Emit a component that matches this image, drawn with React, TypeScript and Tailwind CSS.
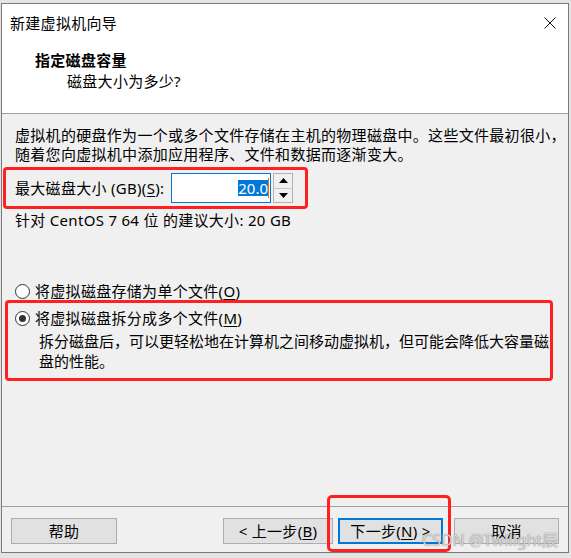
import React from "react";

const F = { fontFamily: '"Noto Sans", "Noto Sans CJK SC", sans-serif' };

function Radio({ checked }: { checked?: boolean }) {
  return (
    <div className="w-[15px] h-[15px] rounded-full border border-[#333333] bg-white flex items-center justify-center shrink-0">
      {checked && <div className="w-[7px] h-[7px] rounded-full bg-[#333333]" />}
    </div>
  );
}

function Btn({ children, w, primary }: { children: React.ReactNode; w: string; primary?: boolean }) {
  return (
    <div
      className={`${w} h-[26px] flex items-center justify-center bg-[#e1e1e1] text-[15px] leading-[20px] text-black ${
        primary ? "border-2 border-[#0078d7]" : "border border-[#adadad]"
      }`}
    >
      {children}
    </div>
  );
}

export default function App() {
  return (
    <div
      className="w-[571px] h-[558px] bg-[#e4e4e4] pt-[3px] pl-[1px] overflow-hidden text-black tracking-[0.3px]"
      style={F}
    >
      <div className="relative w-[568px] h-[550px] border border-[#7a7a7a] bg-[#f0f0f0] flex flex-col overflow-hidden">
        {/* header */}
        <div className="h-[110px] bg-white border-b border-[#a0a0a0] flex flex-col shrink-0">
          <div className="mt-[9px] h-[20px] flex items-center justify-between pl-[8px] pr-[12px]">
            <span className="text-[15px] leading-[20px]">新建虚拟机向导</span>
            <svg width="12" height="12" viewBox="0 0 12 12">
              <path d="M0.5 0.5 L11.5 11.5 M11.5 0.5 L0.5 11.5" stroke="#111" strokeWidth="1" fill="none" />
            </svg>
          </div>
          <div className="mt-[17px] ml-[33px] text-[15px] leading-[20px] font-bold">指定磁盘容量</div>
          <div className="mt-[1px] ml-[65px] text-[15px] leading-[20px]">磁盘大小为多少?</div>
        </div>

        {/* body */}
        <div className="flex-1 flex flex-col">
          <div className="mt-[12px] ml-[13px] text-[15px] leading-[19px] whitespace-nowrap">
            <div>虚拟机的硬盘作为一个或多个文件存储在主机的物理磁盘中。这些文件最初很小，</div>
            <div>随着您向虚拟机中添加应用程序、文件和数据而逐渐变大。</div>
          </div>

          <div className="mt-[3px] ml-[1px] w-[305px] h-[42px] border-[3px] border-[#ff2020] rounded-[4px] flex items-center pl-[9px]">
            <span className="w-[156px] text-[15px] leading-[20px] whitespace-nowrap">
              最大磁盘大小 (GB)(<span className="underline underline-offset-2">S</span>):
            </span>
            <div className="w-[100px] h-[30px] border border-[#0078d7] bg-white flex items-center justify-end pr-[1px]">
              <span className="bg-[#0078d7] text-white text-[15px] leading-[16px] h-[16px] tracking-normal">20.0</span>
              <span className="w-[1px] h-[20px] bg-[#f07020]" />
            </div>
            <div className="ml-[2px] w-[20px] h-[30px] border border-[#b4b4b4] bg-[#f0f0f0] flex flex-col">
              <div className="flex-1 border-b border-[#c8c8c8] flex items-center justify-center">
                <svg width="9" height="5" viewBox="0 0 9 5">
                  <path d="M4.5 0 L9 5 L0 5 Z" fill="#000" />
                </svg>
              </div>
              <div className="flex-1 flex items-center justify-center">
                <svg width="9" height="5" viewBox="0 0 9 5">
                  <path d="M0 0 L9 0 L4.5 5 Z" fill="#000" />
                </svg>
              </div>
            </div>
          </div>

          <div className="mt-[2px] ml-[13px] text-[15px] leading-[18px] whitespace-nowrap">
            针对 CentOS 7 64 位 的建议大小: 20 GB
          </div>

          <div className="mt-[54px] ml-[13px] h-[16px] flex items-center gap-[5px] whitespace-nowrap">
            <Radio />
            <span className="text-[15px] leading-[16px]">
              将虚拟磁盘存储为单个文件(<span className="underline underline-offset-2">O</span>)
            </span>
          </div>

          <div className="mt-[1px] ml-[3px] w-[548px] h-[81px] border-[3px] border-[#ff2020] rounded-[4px] flex flex-col pt-[5px]">
            <div className="ml-[7px] h-[20px] flex items-center gap-[5px] whitespace-nowrap">
              <Radio checked />
              <span className="text-[15px] leading-[20px]">
                将虚拟磁盘拆分成多个文件(<span className="underline underline-offset-2">M</span>)
              </span>
            </div>
            <div className="mt-[3px] ml-[31px] text-[15px] leading-[20px] whitespace-nowrap tracking-normal">
              <div>拆分磁盘后，可以更轻松地在计算机之间移动虚拟机，但可能会降低大容量磁</div>
              <div>盘的性能。</div>
            </div>
          </div>
        </div>

        {/* footer */}
        <div className="h-[46px] border-t border-[#a0a0a0] flex items-start pt-[11px] pl-[9px] pr-[9px] shrink-0">
          <Btn w="w-[106px]">帮助</Btn>
          <div className="ml-auto flex">
            <Btn w="w-[110px]">
              &lt; 上一步(<span className="underline underline-offset-2">B</span>)
            </Btn>
            <div className="ml-[5px]">
              <Btn w="w-[105px]" primary>
                下一步(<span className="underline underline-offset-2">N</span>) &gt;
              </Btn>
            </div>
            <div className="ml-[11px]">
              <Btn w="w-[105px]">取消</Btn>
            </div>
          </div>
        </div>

        {/* annotation overlay */}
        <div className="absolute left-[325px] top-[491px] w-[124px] h-[57px] border-[3px] border-[#ff2020] rounded-[5px] pointer-events-none" />
        <div className="absolute left-[420px] top-[526px] text-[16px] leading-[20px] tracking-normal text-[rgba(255,255,255,0.75)] [text-shadow:0_0_1px_rgba(60,60,60,0.9)] whitespace-nowrap pointer-events-none">
          CSDN @Twilight辰
        </div>
      </div>
    </div>
  );
}
